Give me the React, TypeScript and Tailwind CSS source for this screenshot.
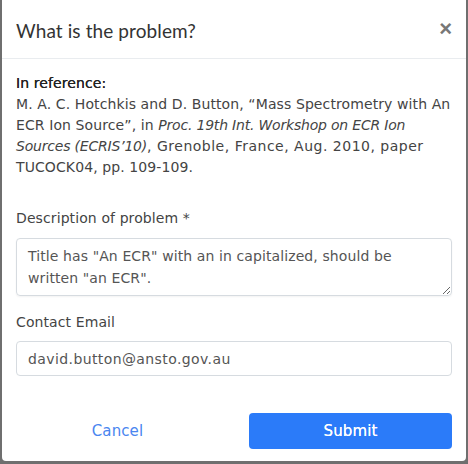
import React from "react";

export default function App() {
  return (
    <div className="w-[468px] h-[464px] bg-[#6f6f6f] pl-[2px] pr-[2px] pb-[3px] overflow-hidden">
      <div className="w-[464px] h-[461px] bg-white rounded-b-[4px] flex flex-col">
        <div className="h-[59px] flex items-center justify-between pl-[14px] pr-[14px] border-b border-[#e9ecef] shrink-0">
          <h2 className="text-[19px] text-[#333] font-['Lato',sans-serif] leading-none pt-[2px] tracking-[0.1px]">What is the problem?</h2>
          <span className="text-[22px] font-bold text-[#777] leading-none font-['Liberation_Sans',sans-serif]">×</span>
        </div>
        <div className="flex flex-col px-[14px] pt-[14px] font-['DejaVu_Sans',sans-serif] text-[14px] tracking-[0.1px] text-[#444]">
          <div className="text-[#222] leading-[21px] [text-shadow:0_0_0.4px_#222]">In reference:</div>
          <p className="leading-[21px] whitespace-nowrap">
            M. A. C. Hotchkis and D. Button, “Mass Spectrometry with An
            <br />
            ECR Ion Source”, in <i className="tracking-[-0.2px]">Proc. 19th Int. Workshop on ECR Ion</i>
            <br />
            <i className="tracking-[-0.2px]">Sources (ECRIS’10)</i>
            <span className="tracking-[0.5px]">, Grenoble, France, Aug. 2010, paper</span>
            <br />
            TUCOCK04, pp. 109-109.
          </p>
          <label className="mt-[30px] leading-[21px] text-[#444]">Description of problem *</label>
          <textarea
            className="mt-[9px] h-[58px] w-full border border-[#d6dbe0] rounded-[4px] px-[11px] py-[6px] leading-[22px] text-[#555] resize-y shadow-[0_1px_2px_rgba(0,0,0,0.05)]"
            defaultValue={'Title has "An ECR" with an in capitalized, should be\nwritten "an ECR".'}
          />
          <label className="mt-[16px] leading-[21px]">Contact Email</label>
          <input
            className="mt-[8px] h-[35px] w-full border border-[#d6dbe0] rounded-[4px] px-[11px] text-[#555] tracking-[0.4px]"
            defaultValue="david.button@ansto.gov.au"
          />
          <div className="mt-[37px] grid grid-cols-2 gap-[30px]">
            <button className="h-[36px] text-[#4a86f0] text-[15px]">Cancel</button>
            <button className="h-[36px] bg-[#2b7bf9] rounded-[4px] text-white text-[15px] [text-shadow:0_0_0.4px_#fff]">Submit</button>
          </div>
        </div>
      </div>
    </div>
  );
}
